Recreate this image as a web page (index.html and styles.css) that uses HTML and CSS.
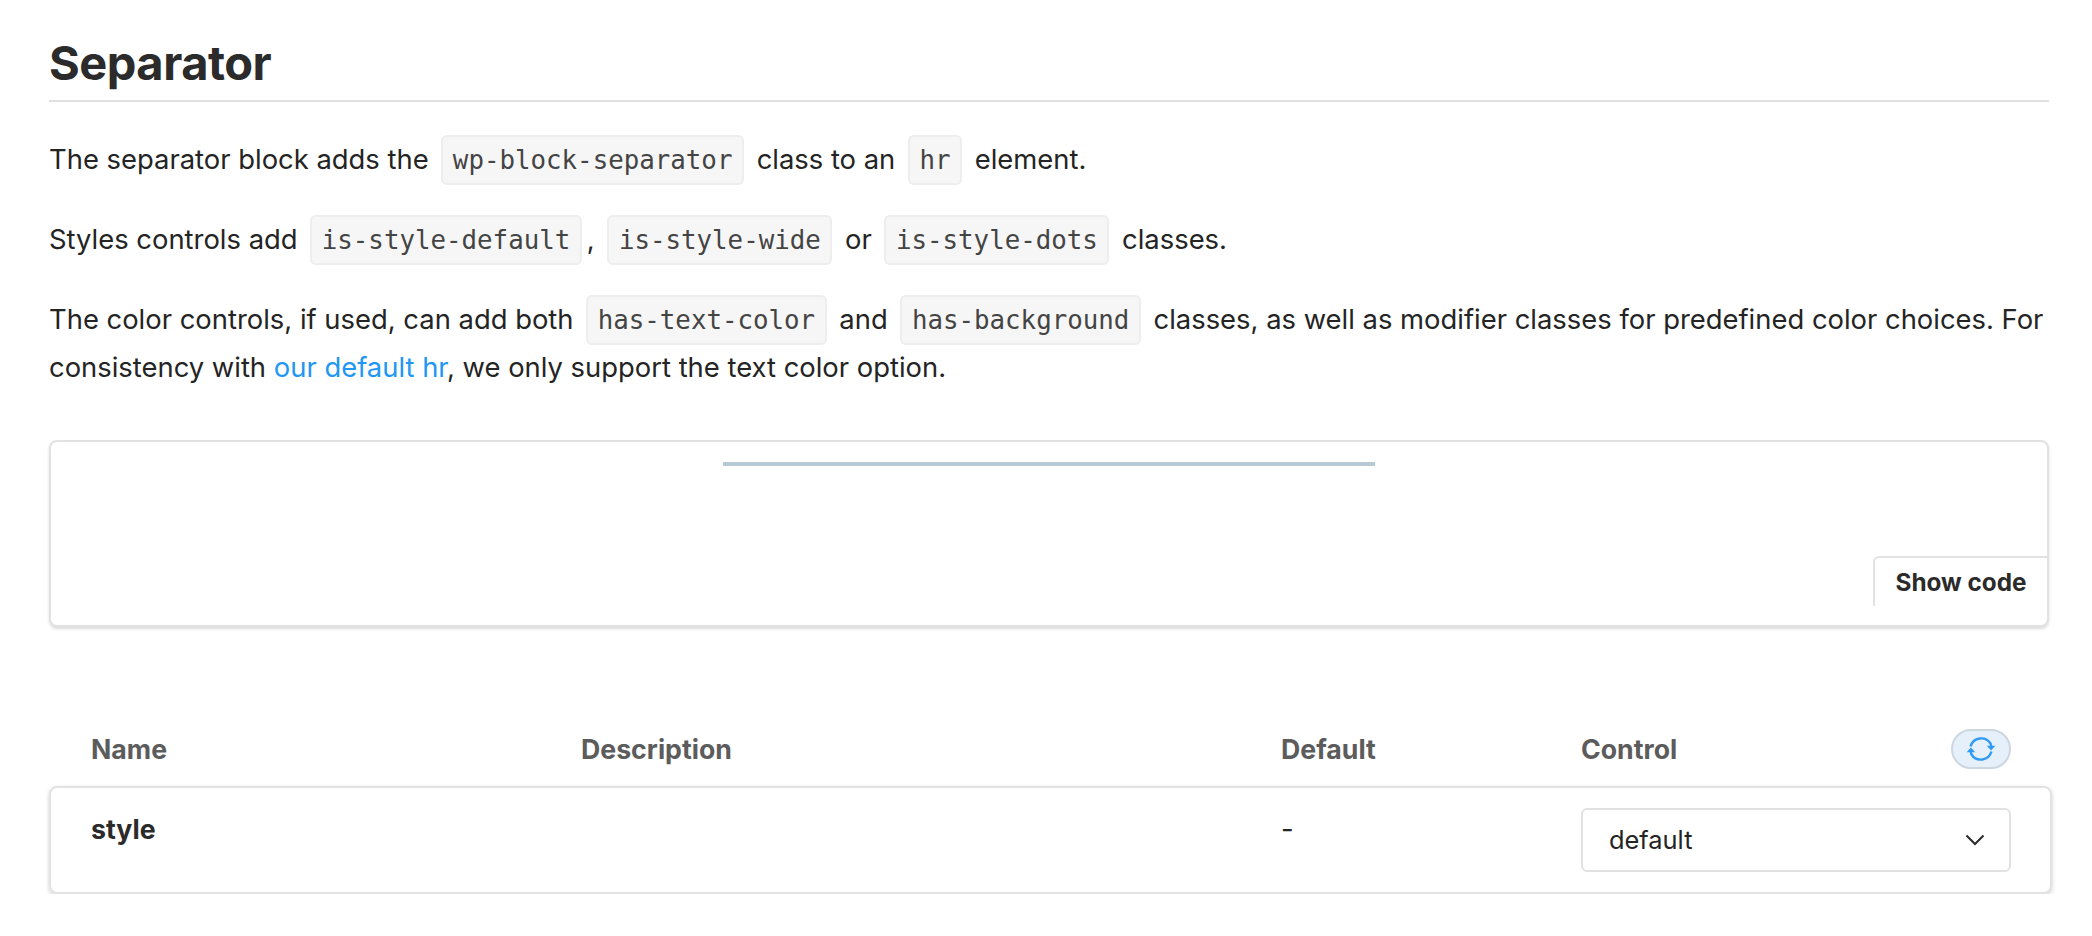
FILE: index.html
```html
<!DOCTYPE html>
<html lang="en">
<head>
<meta charset="utf-8">
<title>Separator</title>
<link rel="stylesheet" href="styles.css">
</head>
<body>
<main class="page">
  <h2 class="title">Separator</h2>
  <p class="para">The separator block adds the <code>wp-block-separator</code> class to an <code>hr</code> element.</p>
  <p class="para">Styles controls add <code>is-style-default</code>, <code>is-style-wide</code> or <code>is-style-dots</code> classes.</p>
  <p class="para">The color controls, if used, can add both <code>has-text-color</code> and <code>has-background</code> classes, as well as modifier classes for predefined color choices. For consistency with <a href="#" class="link">our default hr</a>, we only support the text color option.</p>
  <section class="preview">
    <hr class="sep">
    <button class="show-code" type="button">Show code</button>
  </section>
  <section class="controls">
    <div class="head grid">
      <div>Name</div>
      <div>Description</div>
      <div>Default</div>
      <div class="head-control">
        <span>Control</span>
        <button class="reset" type="button" aria-label="Reset">
          <svg viewBox="0 0 32 32" width="32" height="32" fill="none" stroke="#2f9bf5" stroke-width="2.400">
            <path d="M5.600 13.500a11 11 0 0 1 19.900-3l1 3.500"/>
            <path d="M26.400 18.500a11 11 0 0 1-19.900 3l-1-3.500"/>
            <path d="M21.800 12.800h8.600L26.100 17.600z" fill="#2f9bf5" stroke="none"/>
            <path d="M10.200 19.200H1.600L5.900 14.400z" fill="#2f9bf5" stroke="none"/>
          </svg>
        </button>
      </div>
    </div>
    <div class="row grid">
      <div class="name">style</div>
      <div></div>
      <div class="def">-</div>
      <div class="select">
        <span>default</span>
        <svg viewBox="0 0 20 12" width="20" height="12" fill="none" stroke="#2b2b2b" stroke-width="2"><path d="M1.500 1.500 10 10l8.500-8.500"/></svg>
      </div>
    </div>
  </section>
</main>
</body>
</html>
```
FILE: styles.css
```css
* { box-sizing: border-box; }
html, body { margin: 0; background: #fff; }
body {
  font-family: Inter, "Noto Sans", sans-serif;
  font-size: 27.400px;
  line-height: 48px;
  color: #242424;
}
.page { width: 2000px; margin-left: 49px; padding-top: 33px; }
.title {
  margin: 0 0 33px;
  font-size: 47px;
  line-height: 60px;
  font-weight: 700;
  color: #2b2b2b;
  letter-spacing: -0.5px;
  padding-bottom: 7px;
  border-bottom: 2px solid #e0e0e0;
}
.para { margin: 0 0 32px; }
code {
  font-family: "DejaVu Sans Mono", "Liberation Mono", monospace;
  font-size: 25.800px;
  line-height: 1;
  padding: 8px 9.500px;
  margin: 0 5px;
  color: #444;
  background: #f6f6f6;
  border: 2px solid #eee;
  border-radius: 6px;
}
.link { color: #2196f3; text-decoration: none; }
.preview {
  position: relative;
  height: 187px;
  margin-top: 49px;
  background: #fff;
  border: 2px solid #e2e2e2;
  border-radius: 8px;
  box-shadow: 0 2px 3px rgba(0, 0, 0, .14);
}
.sep {
  width: 652px;
  height: 4px;
  margin: 20px auto 0;
  border: 0;
  background: #b8c9d6;
}
.show-code {
  position: absolute;
  right: 0;
  bottom: 19px;
  height: 50px;
  width: 174px;
  padding: 0;
  background: #fff;
  border: 2px solid #e2e2e2;
  border-width: 2px 0 0 2px;
  border-top-left-radius: 6px;
  font: 700 24.300px Inter, sans-serif;
  color: #2b2b2b;
}
.controls { margin-top: 85px; }
.grid { display: grid; grid-template-columns: 490px 700px 300px 1fr; width: 2003px; }
.head { font-weight: 700; font-size: 26.700px; color: #5c5c5c; align-items: center; height: 74px; padding: 0 41px 0 42px; }
.head-control { display: flex; justify-content: space-between; align-items: center; }
.reset {
  display: flex;
  align-items: center;
  justify-content: center;
  width: 60px;
  height: 40px;
  padding: 0;
  background: #e6f0fb;
  border: 2px solid #ccd7e0;
  border-radius: 20px;
}
.row {
  height: 108px;
  padding: 20px 39px 0 40px;
  border: 2px solid #e2e2e2;
  border-radius: 8px;
  box-shadow: 0 2px 4px rgba(0, 0, 0, .18);
}
.name { font-weight: 700; font-size: 26.700px; color: #2b2b2b; line-height: 42px; }
.def { line-height: 42px; }
.select {
  display: flex;
  align-items: center;
  justify-content: space-between;
  height: 64px;
  padding: 0 24px 0 26px;
  border: 2px solid #e2e2e2;
  border-radius: 6px;
  font-size: 25.400px;
}
```
